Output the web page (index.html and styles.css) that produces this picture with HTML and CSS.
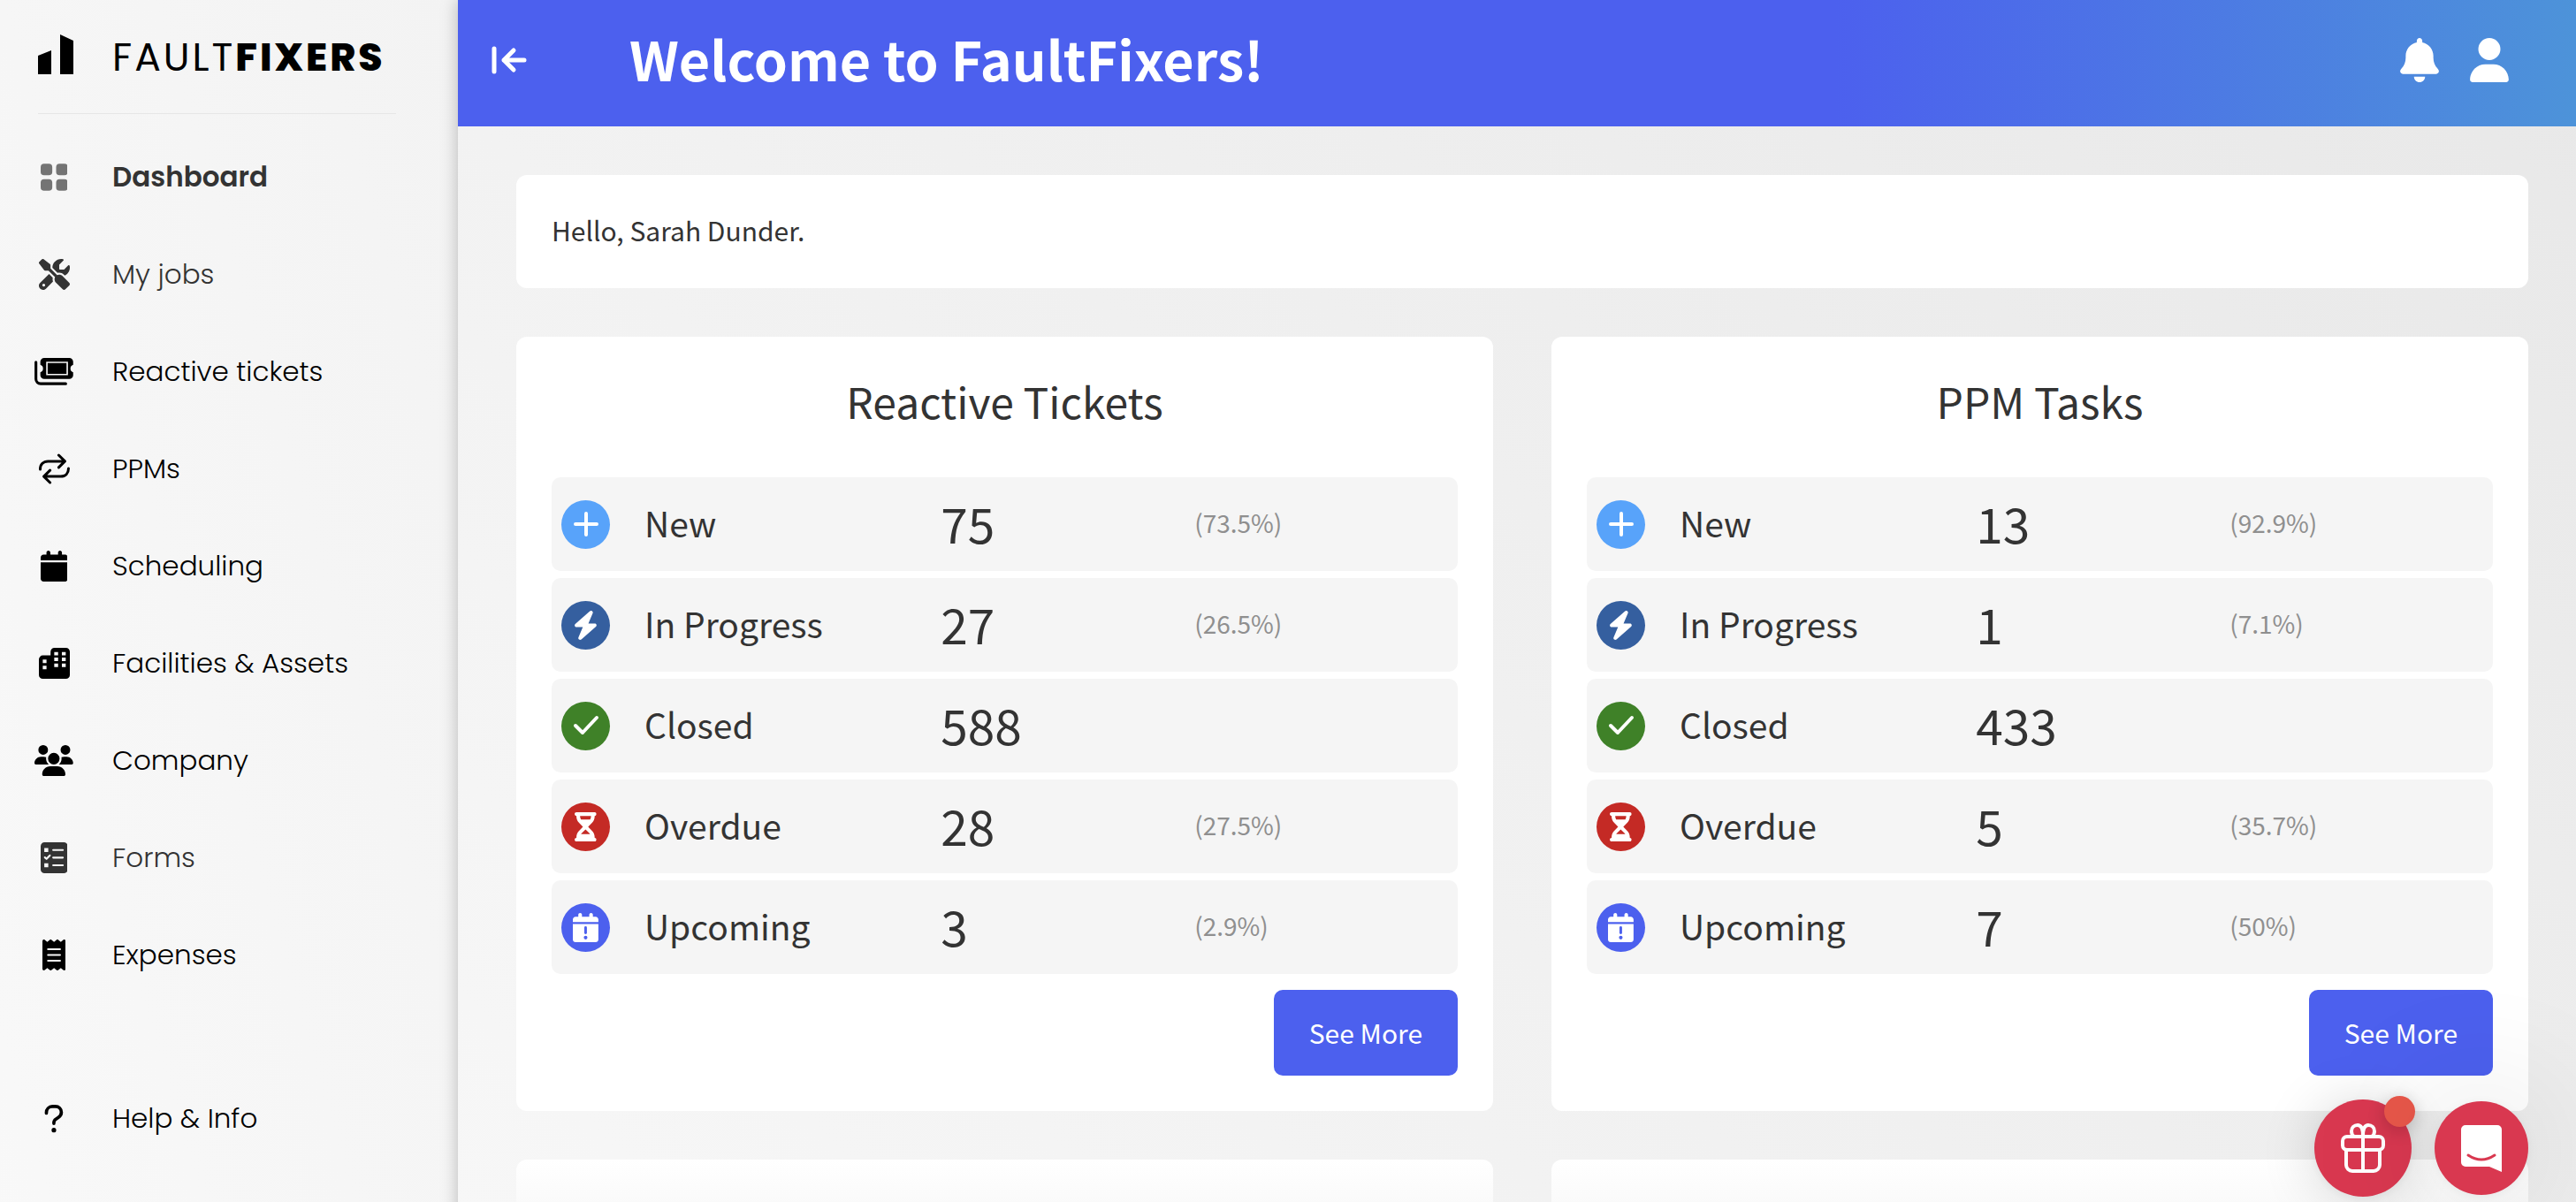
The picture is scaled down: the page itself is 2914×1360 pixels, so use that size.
FILE: index.html
```html
<!DOCTYPE html>
<html lang="en">
<head>
    <meta charset="UTF-8">
    <meta name="viewport" content="width=device-width, initial-scale=1.0">
    <title>FaultFixers - Dashboard</title>
    <link rel="stylesheet" href="styles.css">
</head>
<body>
    <!-- Shared icons -->
    <svg class="sprite" aria-hidden="true">
        <symbol id="i-plus" viewBox="0 0 28 28">
            <path d="M14 2v24M2 14h24" fill="none" stroke="currentColor" stroke-width="4" stroke-linecap="round"/>
        </symbol>
        <symbol id="i-bolt" viewBox="0 0 448 512">
            <path d="M349.4 44.6c5.9-13.7 1.5-29.7-10.6-38.5s-28.6-8-39.9 1.8l-256 224c-10 8.8-13.6 22.9-8.9 35.3S50.7 288 64 288h111.5L98.6 467.4c-5.9 13.7-1.5 29.7 10.6 38.5s28.6 8 39.9-1.8l256-224c10-8.8 13.6-22.9 8.9-35.3s-16.6-20.7-30-20.7H272.5L349.4 44.6z"/>
        </symbol>
        <symbol id="i-check" viewBox="0 0 30 24">
            <path d="M3 12l8 8L27 3" fill="none" stroke="currentColor" stroke-width="4" stroke-linecap="round" stroke-linejoin="round"/>
        </symbol>
        <symbol id="i-hourglass" viewBox="0 0 384 512">
            <path fill-rule="evenodd" d="M32 0C14.3 0 0 14.3 0 32s14.3 32 32 32v11c0 42.4 16.9 83.1 46.9 113.1l67.8 67.9-67.8 67.9C48.9 353.9 32 394.6 32 437v11c-17.7 0-32 14.3-32 32s14.3 32 32 32h320c17.7 0 32-14.3 32-32s-14.3-32-32-32v-11c0-42.4-16.9-83.1-46.9-113.1L237.3 256l67.8-67.9C335.1 158.1 352 117.4 352 75V64c17.7 0 32-14.3 32-32S369.7 0 352 0H32zM96 75V64h192v11c0 19-5.6 37.4-16 53H112c-10.3-15.6-16-34-16-53zm16 309c3.5-5.3 7.6-10.3 12.1-14.9L192 301.3l67.9 67.9c4.6 4.6 8.6 9.6 12.2 14.8H112z"/>
        </symbol>
        <symbol id="i-calendar" viewBox="0 0 448 512">
            <path d="M96 32v32H48C21.5 64 0 85.5 0 112v48h448v-48c0-26.5-21.5-48-48-48h-48V32c0-17.7-14.3-32-32-32s-32 14.3-32 32v32H160V32c0-17.7-14.3-32-32-32S96 14.3 96 32zM448 192H0v272c0 26.5 21.5 48 48 48h352c26.5 0 48-21.5 48-48V192z"/>
        </symbol>
        <symbol id="i-calendar-alert" viewBox="0 0 448 512">
            <use href="#i-calendar" width="448" height="512"/>
            <path d="M224 256v92" fill="none" stroke="#4c60ee" stroke-width="46" stroke-linecap="round"/>
            <circle cx="224" cy="432" r="32" fill="#4c60ee"/>
        </symbol>
    </svg>

    <div class="app">
        <aside class="sidebar">
            <a class="logo" href="#">
                <svg class="logo-mark" viewBox="0 0 40 45"><path d="M0 24l15-6v27H0zM25 0l15 7v38H25z"/></svg>
                <span class="logo-text">FAULT<b>FIXERS</b></span>
            </a>
            <nav class="nav">
                <a class="nav-item active" href="#">
                    <svg class="icon" viewBox="0 0 448 512"><path d="M56 32h80a56 56 0 0 1 56 56v80a56 56 0 0 1-56 56H56a56 56 0 0 1-56-56V88a56 56 0 0 1 56-56zM312 32h80a56 56 0 0 1 56 56v80a56 56 0 0 1-56 56h-80a56 56 0 0 1-56-56V88a56 56 0 0 1 56-56zM56 288h80a56 56 0 0 1 56 56v80a56 56 0 0 1-56 56H56a56 56 0 0 1-56-56v-80a56 56 0 0 1 56-56zM312 288h80a56 56 0 0 1 56 56v80a56 56 0 0 1-56 56h-80a56 56 0 0 1-56-56v-80a56 56 0 0 1 56-56z"/></svg>
                    <span>Dashboard</span>
                </a>
                <a class="nav-item muted" href="#">
                    <svg class="icon" viewBox="0 0 512 512"><path d="M78.6 5C69.1-2.4 55.6-1.5 47 7L7 47c-8.5 8.5-9.4 22-2.1 31.6l80 104c4.5 5.9 11.6 9.4 19 9.4h54.1l109 109c-14.7 29-10 65.4 14.3 89.6l112 112c12.5 12.5 32.8 12.5 45.3 0l64-64c12.5-12.5 12.5-32.8 0-45.3l-112-112c-24.2-24.2-60.6-29-89.6-14.3l-109-109V104c0-7.5-3.5-14.5-9.4-19L78.6 5zM19.9 396.1C7.2 408.8 0 426.1 0 444.1 0 481.6 30.4 512 67.9 512c18 0 35.3-7.2 48-19.9l117.8-117.8c-7.8-20.9-9-43.6-3.6-65.1l-61.7-61.7L19.9 396.1zM512 144c0-10.5-1.1-20.7-3.2-30.5-2.4-11.2-16.1-14.1-24.2-6l-63.9 63.9c-3 3-7.1 4.7-11.3 4.7H352c-8.8 0-16-7.2-16-16v-57.5c0-4.2 1.7-8.3 4.7-11.3l63.9-63.9c8.1-8.1 5.2-21.8-6-24.2C388.7 1.1 378.5 0 368 0c-79.5 0-144 64.5-144 144v.8l85.3 85.3c36-9.1 75.8.5 104 28.7l15.7 15.7c49-23 83-72.8 83-130.5zM56 432a24 24 0 1 1 48 0 24 24 0 1 1-48 0z"/></svg>
                    <span>My jobs</span>
                </a>
                <a class="nav-item" href="#">
                    <svg class="icon" viewBox="0 0 640 512">
                        <path d="M24 100v278a78 78 0 0 0 78 78h415" fill="none" stroke="currentColor" stroke-width="46" stroke-linecap="round"/>
                        <path fill-rule="evenodd" d="M161 29h415a64 64 0 0 1 64 64v48a66 66 0 0 0 0 125v48a64 64 0 0 1-64 64H161a64 64 0 0 1-64-64v-48a66 66 0 0 0 0-125V93a64 64 0 0 1 64-64zm33 61v226h360V90zM218 114h312v178H218z"/>
                    </svg>
                    <span>Reactive tickets</span>
                </a>
                <a class="nav-item" href="#">
                    <svg class="icon" viewBox="0 0 512 512"><path d="M22 262c0-80 52-132 128-132h275M328 29l102 101-102 102M490 250c0 80-52 132-128 132H87M184 483L82 382l102-102" fill="none" stroke="currentColor" stroke-width="44" stroke-linecap="round" stroke-linejoin="round"/></svg>
                    <span>PPMs</span>
                </a>
                <a class="nav-item" href="#">
                    <svg class="icon" viewBox="0 0 448 512"><use href="#i-calendar"/></svg>
                    <span>Scheduling</span>
                </a>
                <a class="nav-item" href="#">
                    <svg class="icon" viewBox="0 0 512 512"><path fill-rule="evenodd" d="M257 0h191a64 64 0 0 1 64 64v384a64 64 0 0 1-64 64H64a64 64 0 0 1-64-64V190a64 64 0 0 1 64-64h129V64a64 64 0 0 1 64-64zM64 193v58h62v-58zM64 295v58h62v-58zM254 68v58h64V68zM380 68v58h64V68zM254 162v58h64v-58zM380 162v58h64v-58zM254 260v58h64v-58zM380 260v58h64v-58z"/></svg>
                    <span>Facilities &amp; Assets</span>
                </a>
                <a class="nav-item" href="#">
                    <svg class="icon" viewBox="0 0 640 512"><path d="M144 0a80 80 0 1 1 0 160 80 80 0 1 1 0-160zM512 0a80 80 0 1 1 0 160 80 80 0 1 1 0-160zM0 298.7C0 239.8 47.8 192 106.7 192h42.7c15.9 0 31 3.5 44.6 9.7-1.3 7.2-1.9 14.7-1.9 22.3 0 38.2 16.8 72.5 43.3 96H21.3C9.6 320 0 310.4 0 298.7zM405.3 320c26.6-23.5 42.7-57.8 42.7-96 0-7.6-.7-15-1.9-22.3 13.6-6.3 28.7-9.7 44.6-9.7h42.7C592.2 192 640 239.8 640 298.7c0 11.8-9.6 21.3-21.3 21.3H405.3zM224 224a96 96 0 1 1 192 0 96 96 0 1 1-192 0zM128 485.3C128 411.7 187.7 352 261.3 352h117.4C452.3 352 512 411.7 512 485.3c0 14.7-11.9 26.7-26.7 26.7H154.7c-14.7 0-26.7-11.9-26.7-26.7z"/></svg>
                    <span>Company</span>
                </a>
                <a class="nav-item muted" href="#">
                    <svg class="icon" viewBox="0 0 448 512">
                        <path fill-rule="evenodd" d="M64 0h320a64 64 0 0 1 64 64v384a64 64 0 0 1-64 64H64a64 64 0 0 1-64-64V64A64 64 0 0 1 64 0zM60 96v64h66V96zM60 348v64h66v-64z"/>
                        <path d="M207 128h160M207 254h160M207 380h160M70 250l27 25 54-57" fill="none" stroke="#f6f6f6" stroke-width="32" stroke-linecap="round" stroke-linejoin="round"/>
                    </svg>
                    <span>Forms</span>
                </a>
                <a class="nav-item" href="#">
                    <svg class="icon" viewBox="0 0 384 512">
                        <path d="M14 2.2C22.5-1.7 32.5-.3 39.6 5.8L80 40.4l40.4-34.6c9-7.7 22.3-7.7 31.2 0L192 40.4l40.4-34.6c9-7.7 22.3-7.7 31.2 0L304 40.4l40.4-34.6c7.1-6.1 17.1-7.5 25.6-3.6s14 12.4 14 21.8v464c0 9.4-5.5 17.9-14 21.8s-18.5 2.5-25.6-3.6L304 471.6l-40.4 34.6c-9 7.7-22.3 7.7-31.2 0L192 471.6l-40.4 34.6c-9 7.7-22.3 7.7-31.2 0L80 471.6l-40.4 34.6c-7.1 6.1-17.1 7.5-25.6 3.6S0 497.4 0 488V24C0 14.6 5.5 6.1 14 2.2z"/>
                        <path d="M92 160h200M92 256h200M92 352h200" stroke="#f6f6f6" stroke-width="30" stroke-linecap="round"/>
                    </svg>
                    <span>Expenses</span>
                </a>
                <a class="nav-item help" href="#">
                    <svg class="icon" viewBox="0 0 320 512">
                        <path d="M36 168v-8c0-58 42-102 98-102h52c56 0 98 42 98 96 0 36-18 64-48 84l-42 28c-22 14-34 34-34 60v12" fill="none" stroke="currentColor" stroke-width="54" stroke-linecap="round"/>
                        <circle cx="160" cy="448" r="38"/>
                    </svg>
                    <span>Help &amp; Info</span>
                </a>
            </nav>
        </aside>

        <div class="page">
            <header class="topbar">
                <button class="icon-btn" type="button" aria-label="Collapse menu">
                    <svg class="collapse" viewBox="0 0 40 32"><path d="M3 3v26M14 16h23M25 5L14 16l11 11" fill="none" stroke="currentColor" stroke-width="5" stroke-linecap="round" stroke-linejoin="round"/></svg>
                </button>
                <h1>Welcome to FaultFixers!</h1>
                <div class="topbar-actions">
                    <button class="icon-btn" type="button" aria-label="Notifications">
                        <svg class="action" viewBox="0 0 448 512"><path d="M224 0c-17.7 0-32 14.3-32 32v19.2C119 66 64 130.6 64 208v18.8c0 47-17.3 92.4-48.5 127.6l-7.4 8.3c-8.4 9.4-10.4 22.9-5.3 34.4S19.4 416 32 416h384c12.6 0 24-7.4 29.2-18.9s3.1-25-5.3-34.4l-7.4-8.3C401.3 319.2 384 273.9 384 226.8V208c0-77.4-55-142-128-156.8V32c0-17.7-14.3-32-32-32zm45.3 493.3c12-12 18.7-28.3 18.7-45.3H160c0 17 6.7 33.3 18.7 45.3S207 512 224 512s33.3-6.7 45.3-18.7z"/></svg>
                    </button>
                    <button class="icon-btn" type="button" aria-label="Account">
                        <svg class="action" viewBox="0 0 448 512"><path d="M224 256a128 128 0 1 0 0-256 128 128 0 1 0 0 256zm-45.7 48C79.8 304 0 383.8 0 482.3 0 498.7 13.3 512 29.7 512h388.6c16.4 0 29.7-13.3 29.7-29.7C448 383.8 368.2 304 269.7 304h-91.4z"/></svg>
                    </button>
                </div>
            </header>

            <main class="content">
                <section class="card greeting">
                    <p>Hello, Sarah Dunder.</p>
                </section>

                <section class="card">
                    <h2>Reactive Tickets</h2>
                    <table class="stats">
                        <tr>
                            <td><span class="badge new"><svg viewBox="0 0 28 28"><use href="#i-plus"/></svg></span></td>
                            <th scope="row">New</th><td class="count">75</td><td class="percent">(73.5%)</td>
                        </tr>
                        <tr>
                            <td><span class="badge progress"><svg viewBox="0 0 448 512"><use href="#i-bolt"/></svg></span></td>
                            <th scope="row">In Progress</th><td class="count">27</td><td class="percent">(26.5%)</td>
                        </tr>
                        <tr>
                            <td><span class="badge closed"><svg viewBox="0 0 30 24"><use href="#i-check"/></svg></span></td>
                            <th scope="row">Closed</th><td class="count">588</td><td class="percent"></td>
                        </tr>
                        <tr>
                            <td><span class="badge overdue"><svg viewBox="0 0 384 512"><use href="#i-hourglass"/></svg></span></td>
                            <th scope="row">Overdue</th><td class="count">28</td><td class="percent">(27.5%)</td>
                        </tr>
                        <tr>
                            <td><span class="badge upcoming"><svg viewBox="0 0 448 512"><use href="#i-calendar-alert"/></svg></span></td>
                            <th scope="row">Upcoming</th><td class="count">3</td><td class="percent">(2.9%)</td>
                        </tr>
                    </table>
                    <button class="btn" type="button">See More</button>
                </section>

                <section class="card">
                    <h2>PPM Tasks</h2>
                    <table class="stats">
                        <tr>
                            <td><span class="badge new"><svg viewBox="0 0 28 28"><use href="#i-plus"/></svg></span></td>
                            <th scope="row">New</th><td class="count">13</td><td class="percent">(92.9%)</td>
                        </tr>
                        <tr>
                            <td><span class="badge progress"><svg viewBox="0 0 448 512"><use href="#i-bolt"/></svg></span></td>
                            <th scope="row">In Progress</th><td class="count">1</td><td class="percent">(7.1%)</td>
                        </tr>
                        <tr>
                            <td><span class="badge closed"><svg viewBox="0 0 30 24"><use href="#i-check"/></svg></span></td>
                            <th scope="row">Closed</th><td class="count">433</td><td class="percent"></td>
                        </tr>
                        <tr>
                            <td><span class="badge overdue"><svg viewBox="0 0 384 512"><use href="#i-hourglass"/></svg></span></td>
                            <th scope="row">Overdue</th><td class="count">5</td><td class="percent">(35.7%)</td>
                        </tr>
                        <tr>
                            <td><span class="badge upcoming"><svg viewBox="0 0 448 512"><use href="#i-calendar-alert"/></svg></span></td>
                            <th scope="row">Upcoming</th><td class="count">7</td><td class="percent">(50%)</td>
                        </tr>
                    </table>
                    <button class="btn" type="button">See More</button>
                </section>

                <section class="card next"></section>
                <section class="card next"></section>
            </main>
        </div>
    </div>

    <!-- Floating widgets -->
    <div class="widgets">
        <button class="widget gift" type="button" aria-label="What's new">
            <svg viewBox="0 0 50 56"><path d="M25 14v40M7 15h36a5 5 0 0 1 5 5v5a5 5 0 0 1-5 5H7a5 5 0 0 1-5-5v-5a5 5 0 0 1 5-5zM6 30v17a7 7 0 0 0 7 7h24a7 7 0 0 0 7-7V30M15 15c-3-2-3-5-3-6 0-4 3-7 7-7s6 4 6 12c0-8 2-12 6-12s7 3 7 7c0 1 0 4-3 6" fill="none" stroke="currentColor" stroke-width="4" stroke-linejoin="round"/></svg>
            <span class="dot"></span>
        </button>
        <button class="widget chat" type="button" aria-label="Open chat">
            <svg viewBox="0 0 46 53"><path d="M5 0h36a5 5 0 0 1 5 5v48l-14-6H5a5 5 0 0 1-5-5V5a5 5 0 0 1 5-5z"/><path d="M8 34q15 10 30 0" fill="none" stroke="#d93850" stroke-width="3" stroke-linecap="round"/></svg>
        </button>
    </div>
</body>
</html>
```
FILE: styles.css
```css
* {
    box-sizing: border-box;
}
body {
    margin: 0;
    font-family: 'Source Sans Pro', 'Noto Sans CJK SC', sans-serif;
    color: #333;
    background: linear-gradient(45deg, #f9f9f9, #e8e8e8);
}
svg {
    display: block;
    fill: currentColor;
}
button {
    font-family: inherit;
    border: none;
    cursor: pointer;
}
.sprite {
    position: absolute;
    width: 0;
    height: 0;
}
.app {
    display: grid;
    grid-template-columns: 518px 1fr;
    height: 100vh;
    overflow: hidden;
}

/* Sidebar */
.sidebar {
    padding: 0 70px 0 43px;
    background: linear-gradient(to top right, #f9f9f9, #f3f3f3);
    color: #000;
}
.logo {
    display: flex;
    align-items: center;
    gap: 44px;
    height: 129px;
    padding-bottom: 6px;
    border-bottom: 1px solid #e6e6e6;
    color: #000;
    text-decoration: none;
}
.logo-mark {
    width: 40px;
    height: 45px;
}
.logo-text {
    padding-top: 8px;
    font-family: Poppins, Lato, sans-serif;
    font-size: 44px;
    line-height: 48px;
    font-weight: 400;
    letter-spacing: 3px;
}
.logo-text b {
    font-weight: 800;
}
.nav {
    display: flex;
    flex-direction: column;
    padding-top: 16px;
}
.nav-item {
    display: grid;
    grid-template-columns: 36px 1fr;
    column-gap: 48px;
    align-items: center;
    justify-items: center;
    height: 110px;
    font-family: Poppins, Inter, sans-serif;
    font-size: 31px;
    font-weight: 300;
    color: #000;
    text-decoration: none;
    white-space: nowrap;
}
.nav-item span {
    justify-self: start;
}
.nav-item .icon {
    height: 35px;
}
.nav-item.active {
    font-weight: 600;
    color: #333;
}
.nav-item.active .icon {
    color: #747474;
}
.nav-item.muted {
    color: #333;
}
.nav-item.help {
    margin-top: 75px;
}

/* Page */
.page {
    box-shadow: 0 0 18px rgba(0,0,0,0.25);
    clip-path: inset(0 0 0 -40px);
}
.topbar {
    display: flex;
    align-items: center;
    height: 143px;
    padding: 0 76px 8px 38px;
    background: linear-gradient(to right, #4c60ee 65%, #4d93d9);
    color: #fff;
}
.topbar h1 {
    margin: 0 0 4px 116px;
    font-size: 61px;
    line-height: 80px;
    font-weight: 700;
}
.topbar-actions {
    display: flex;
    gap: 35px;
    margin-left: auto;
}
.icon-btn {
    padding: 0;
    background: none;
    color: #fff;
}
.collapse {
    width: 40px;
    height: 32px;
}
.action {
    width: 44px;
    height: 50px;
}
.content {
    display: grid;
    grid-template-columns: 1fr 1fr;
    gap: 55px 66px;
    padding: 55px 54px 55px 66px;
}
.card {
    padding: 40px;
    border-radius: 12px;
    background: white;
}
.greeting {
    grid-column: 1 / -1;
    padding-top: 38px;
    padding-bottom: 42px;
}
.greeting p {
    margin: 0;
    font-size: 30px;
    line-height: 48px;
}
.card h2 {
    margin: 0;
    font-size: 48px;
    line-height: 64px;
    font-weight: 400;
    text-align: center;
}
.next {
    height: 400px;
    background: linear-gradient(#fff, #f9f9f9 60px);
}

/* Stats rows */
.stats {
    width: 100%;
    margin-top: 47px;
    border-spacing: 0 8px;
    table-layout: fixed;
}
.stats td, .stats th {
    height: 106px;
    padding: 0 0 4px;
    background: #f5f5f5;
    font-size: 39px;
    line-height: 60px;
    font-weight: 400;
    text-align: left;
}
.stats td:first-child {
    width: 105px;
    padding: 0 0 0 11px;
    border-radius: 10px 0 0 10px;
}
.stats th {
    width: 32.7%;
}
.stats .count {
    width: 28%;
    font-size: 55px;
}
.stats .percent {
    border-radius: 0 10px 10px 0;
    font-size: 28px;
    color: #8f8f8f;
}
.badge {
    display: flex;
    align-items: center;
    justify-content: center;
    width: 55px;
    height: 55px;
    border-radius: 50%;
    color: white;
}
.badge svg {
    height: 33px;
}
.badge.new {
    background: #58a3fa;
}
.badge.new svg {
    height: 28px;
}
.badge.progress {
    background: #355f9f;
}
.badge.closed {
    background: #3f8128;
}
.badge.closed svg {
    height: 24px;
}
.badge.overdue {
    background: #c42a25;
}
.badge.upcoming {
    background: #4c60ee;
}
.btn {
    display: block;
    height: 97px;
    margin: 10px 0 0 auto;
    padding: 0 40px 2px;
    border-radius: 10px;
    background: #4c60ee;
    color: white;
    font-size: 30px;
}

/* Floating widgets */
.widgets {
    position: fixed;
    right: 54px;
    bottom: 6px;
    display: flex;
    align-items: center;
    gap: 26px;
}
.widget {
    position: relative;
    display: flex;
    align-items: center;
    justify-content: center;
    padding: 0;
    border-radius: 50%;
    background: #d93850;
    color: white;
    box-shadow: 0 2px 12px rgba(0,0,0,0.06), 0 4px 64px rgba(0,0,0,0.16);
}
.gift {
    width: 110px;
    height: 110px;
}
.gift svg {
    width: 50px;
    height: 56px;
}
.chat {
    width: 106px;
    height: 106px;
    box-shadow: 0 2px 12px rgba(0,0,0,0.06), 0 4px 160px rgba(0,0,0,0.2);
}
.chat svg {
    width: 46px;
    height: 53px;
}
.dot {
    position: absolute;
    top: -4px;
    right: -4px;
    width: 35px;
    height: 35px;
    border-radius: 50%;
    background: #e8574a;
    box-shadow: 0 4px 20px rgba(0,0,0,0.2);
}
```
